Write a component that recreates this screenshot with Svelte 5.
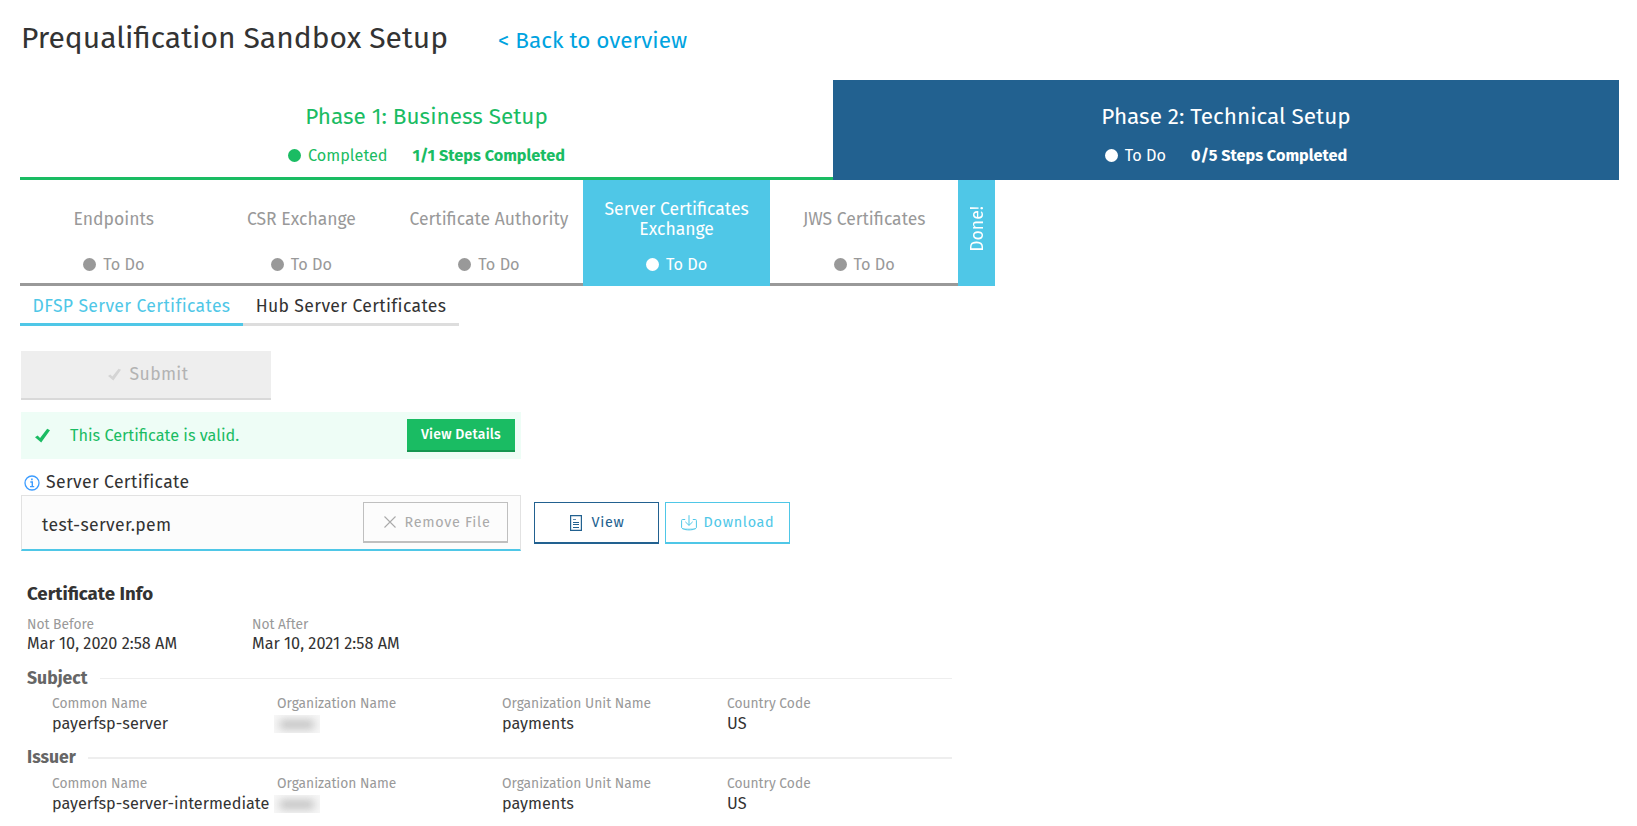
<script>
  const steps = [
    { label: 'Endpoints' },
    { label: 'CSR Exchange' },
    { label: 'Certificate Authority' },
    { label: 'Server Certificates Exchange', active: true },
    { label: 'JWS Certificates' }
  ];

  const validity = [
    { label: 'Not Before', value: 'Mar 10, 2020 2:58 AM' },
    { label: 'Not After', value: 'Mar 10, 2021 2:58 AM' }
  ];

  const entities = [
    {
      title: 'Subject',
      fields: [
        { label: 'Common Name', value: 'payerfsp-server' },
        { label: 'Organization Name', hidden: true },
        { label: 'Organization Unit Name', value: 'payments' },
        { label: 'Country Code', value: 'US' }
      ]
    },
    {
      title: 'Issuer',
      fields: [
        { label: 'Common Name', value: 'payerfsp-server-intermediate' },
        { label: 'Organization Name', hidden: true },
        { label: 'Organization Unit Name', value: 'payments' },
        { label: 'Country Code', value: 'US' }
      ]
    }
  ];
</script>

{#snippet check(size)}
  <svg width={size} height={size} viewBox="0 0 16 16" fill="currentColor">
    <path d="M0 9.8 2.8 8l2.6 2.6L13 .9l3 1.400L6.600 15.400Z" />
  </svg>
{/snippet}

<main>
  <header>
    <h1>Prequalification Sandbox Setup</h1>
    <a class="back">&lt; Back to overview</a>
  </header>

  <section class="phases">
    <div class="phase done">
      <h2>Phase 1: Business Setup</h2>
      <div class="status"><i class="dot"></i><span>Completed</span><b>1/1 Steps Completed</b></div>
    </div>
    <div class="phase current">
      <h2>Phase 2: Technical Setup</h2>
      <div class="status"><i class="dot"></i><span>To Do</span><b>0/5 Steps Completed</b></div>
    </div>
  </section>

  <section class="steps">
    {#each steps as step}
      <div class="step" class:active={step.active}>
        <div class="label">{step.label}</div>
        <div class="status"><i class="dot"></i><span>To Do</span></div>
      </div>
    {/each}
    <div class="finish"><span>Done!</span></div>
  </section>

  <nav class="tabs">
    <div class="tab selected">DFSP Server Certificates</div>
    <div class="tab">Hub Server Certificates</div>
  </nav>

  <button class="submit">{@render check(13)}<span>Submit</span></button>

  <div class="banner">
    {@render check(15)}
    <span class="message">This Certificate is valid.</span>
    <button class="details">View Details</button>
  </div>

  <div class="field-label">
    <svg width="16" height="16" viewBox="0 0 16 16" fill="none" stroke="#3c9cff">
      <circle cx="8" cy="8" r="7" stroke-width="1.3" />
      <path d="M6.3 7h2v4.3M6 11.6h4.2" stroke-width="1.4" />
      <path d="M7.1 4.4h1.6" stroke-width="1.6" />
    </svg>
    <span>Server Certificate</span>
  </div>

  <div class="file-row">
    <div class="file">
      <span class="name">test-server.pem</span>
      <button class="outline remove">
        <svg width="12" height="12" viewBox="0 0 12 12" stroke="currentColor" stroke-width="1.1">
          <path d="M.5.5l11 11M11.5.5l-11 11" />
        </svg>
        <span>Remove File</span>
      </button>
    </div>
    <button class="outline view">
      <svg width="12" height="16" viewBox="0 0 12 16" fill="none" stroke="currentColor">
        <path d="M.6.6h10.8v14.8H.6z" stroke-width="1.2" />
        <path d="M3 4.500h3" stroke-opacity=".7" />
        <path d="M3 7.500h6M3 9.500h6M3 12.500h6" />
      </svg>
      <span>View</span>
    </button>
    <button class="outline download">
      <svg width="16" height="16" viewBox="0 0 16 16" fill="none" stroke="currentColor">
        <path d="M4.200 4.500H1.600C.9 4.500.6 4.800.6 5.500v7.100c0 .9 2.900 2.300 7.400 2.300s7.400-1.400 7.400-2.300V5.500c0-.7-.3-1-1-1h-2.600" />
        <path d="M1 13.500c3.500.8 10.500.8 14 0" stroke-opacity=".6" />
        <path d="M8 .2v10M4.300 6.800 8 10.400l3.700-3.600" />
      </svg>
      <span>Download</span>
    </button>
  </div>

  <section class="info">
    <h3>Certificate Info</h3>
    <div class="fields">
      {#each validity as f}
        <div class="item"><label>{f.label}</label><span>{f.value}</span></div>
      {/each}
    </div>
    {#each entities as e}
      <div class="heading"><h4>{e.title}</h4><hr /></div>
      <div class="fields nested">
        {#each e.fields as f}
          <div class="item">
            <label>{f.label}</label>
            {#if f.hidden}
              <div class="redacted"><i></i></div>
            {:else}
              <span>{f.value}</span>
            {/if}
          </div>
        {/each}
      </div>
    {/each}
  </section>
</main>

<style>
  :global(body) {
    background: #fff;
  }
  main {
    width: 1637px;
    height: 826px;
    overflow: hidden;
    box-sizing: border-box;
    padding-left: 20px;
    font-family: 'Fira Sans', 'Noto Sans', sans-serif;
    font-size: 16.25px;
    line-height: 20px;
    color: #333;
  }
  main :global(*) {
    box-sizing: border-box;
  }
  h1, h2, h3, h4, hr {
    margin: 0;
    font-weight: 400;
  }
  svg {
    flex: none;
    display: block;
  }
  button {
    font-family: inherit;
    margin: 0;
    padding: 0;
    border: 0;
    border-radius: 0;
    display: flex;
    align-items: center;
    justify-content: center;
  }
  header {
    height: 80px;
    padding: 8px 0 0 1px;
    display: flex;
    align-items: baseline;
    gap: 50px;
  }
  h1 {
    font-size: 30px;
    line-height: 60px;
  }
  .back {
    font-size: 22.5px;
    color: #00a3e0;
  }
  .phases {
    width: 1599px;
    height: 100px;
    display: flex;
  }
  .phase {
    padding-top: 24px;
    display: flex;
    flex-direction: column;
    align-items: center;
    gap: 16px;
  }
  .phase.done {
    width: 813px;
    color: #1abc63;
    border-bottom: 3px solid #1abc63;
  }
  .phase.current {
    flex: 1;
    color: #fff;
    background: #226190;
  }
  h2 {
    font-size: 22.5px;
    line-height: 26px;
  }
  .status {
    display: flex;
    align-items: center;
    justify-content: center;
  }
  .dot {
    width: 13px;
    height: 13px;
    border-radius: 50%;
    background: currentColor;
    margin: 0 7px 2px 0;
  }
  .status b {
    margin-left: 25px;
    font-weight: 700;
  }
  .steps {
    height: 106px;
    display: flex;
  }
  .step {
    width: 187.6px;
    padding-top: 20px;
    color: #999;
    border-bottom: 3px solid #999;
    text-align: center;
  }
  .step.active {
    color: #fff;
    background: #4fc7e7;
    border-color: #4fc7e7;
  }
  .label {
    height: 40px;
    padding: 0 10px;
    margin-bottom: 15px;
    display: flex;
    align-items: center;
    justify-content: center;
    font-size: 17.55px;
  }
  .finish {
    width: 37px;
    padding-left: 4px;
    background: #4fc7e7;
    color: #fff;
    display: flex;
    align-items: center;
    justify-content: center;
  }
  .finish span {
    writing-mode: vertical-rl;
    transform: rotate(180deg);
    font-size: 17.6px;
    margin-bottom: 9px;
  }
  .tabs {
    height: 40px;
    display: flex;
    font-size: 17.6px;
    letter-spacing: 0.35px;
  }
  .tab {
    width: 216px;
    padding-top: 11px;
    text-align: center;
    border-bottom: 3px solid #ddd;
  }
  .tab.selected {
    width: 223px;
    color: #4fc7e7;
    border-color: #4fc7e7;
  }
  .submit {
    width: 250px;
    height: 49px;
    margin: 25px 0 0 1px;
    background: #eee;
    border-bottom: 2px solid #d9d9d9;
    color: #d4d4d4;
    font-size: 17.6px;
    letter-spacing: 0.35px;
    gap: 9px;
    padding: 0 0 0 4px;
  }
  .submit span {
    color: #b3b3b3;
  }
  .banner {
    width: 500px;
    height: 47px;
    margin: 12px 0 0 1px;
    padding: 0 6px 0 14px;
    background: #eefdf6;
    color: #1abc63;
    display: flex;
    align-items: center;
  }
  .message {
    margin-left: 20px;
    flex: 1;
  }
  .details {
    width: 108px;
    height: 33px;
    background: #1abc63;
    border-bottom: 2px solid #159650;
    color: #fff;
    font-size: 14px;
    font-weight: 500;
    letter-spacing: 0.2px;
  }
  .field-label {
    height: 36px;
    padding: 12px 0 0 4px;
    display: flex;
    align-items: center;
    gap: 6px;
    font-size: 17.6px;
    letter-spacing: 0.35px;
  }
  .file-row {
    margin-left: 1px;
    height: 56px;
    display: flex;
    align-items: flex-start;
  }
  .file {
    width: 500px;
    height: 56px;
    margin-right: 13px;
    border: 1px solid #e2e2e2;
    border-bottom: 2px solid #4fc7e7;
    background: #fcfcfc;
    padding: 6px 12px 0 20px;
    display: flex;
    justify-content: space-between;
    align-items: flex-start;
  }
  .name {
    font-size: 17.6px;
    letter-spacing: 0.35px;
    margin-top: 14px;
  }
  .outline {
    background: transparent;
    border: 1px solid currentColor;
    border-bottom-width: 2px;
    font-size: 14.4px;
    letter-spacing: 0.7px;
    gap: 9px;
    padding-left: 2px;
  }
  .remove {
    width: 145px;
    height: 41px;
    border-color: #bfbfbf;
    color: #aaa;
    padding-left: 3px;
  }
  .view, .download {
    width: 125px;
    height: 42px;
    margin: 7px 6px 0 0;
  }
  .view {
    color: #226190;
  }
  .download {
    color: #4fc7e7;
    gap: 7px;
    padding-left: 0;
  }
  .info {
    padding: 32px 0 0 7px;
  }
  h3 {
    font-size: 18.7px;
    line-height: 22px;
    font-weight: 700;
    margin-bottom: 11px;
  }
  .fields {
    display: flex;
    height: 40px;
  }
  .item {
    width: 225px;
    white-space: nowrap;
    display: flex;
    flex-direction: column;
  }
  .item label {
    font-size: 13.8px;
    line-height: 18px;
    color: #999;
  }
  .nested {
    padding-left: 25px;
    margin-bottom: 12px;
  }
  .nested .item label {
    line-height: 19px;
  }
  .nested .item span {
    line-height: 21px;
  }
  .heading {
    width: 925px;
    height: 23px;
    margin: 11px 0 4px;
    display: flex;
    align-items: center;
    gap: 12px;
  }
  .nested + .heading {
    margin: 0 0 5px;
  }
  h4 {
    font-size: 17.6px;
    font-weight: 700;
    color: #666;
  }
  hr {
    flex: 1;
    border: 0;
    height: 1px;
    background: #eee;
  }
  .nested + .heading hr {
    height: 2px;
  }
  .redacted {
    width: 46px;
    height: 18px;
    margin: 2px 0 0 -3px;
    overflow: hidden;
    background: #f7f7f7;
    padding: 5px 6px;
  }
  .redacted i {
    display: block;
    height: 9px;
    background: #c0c0c0;
    filter: blur(4px);
  }
</style>
